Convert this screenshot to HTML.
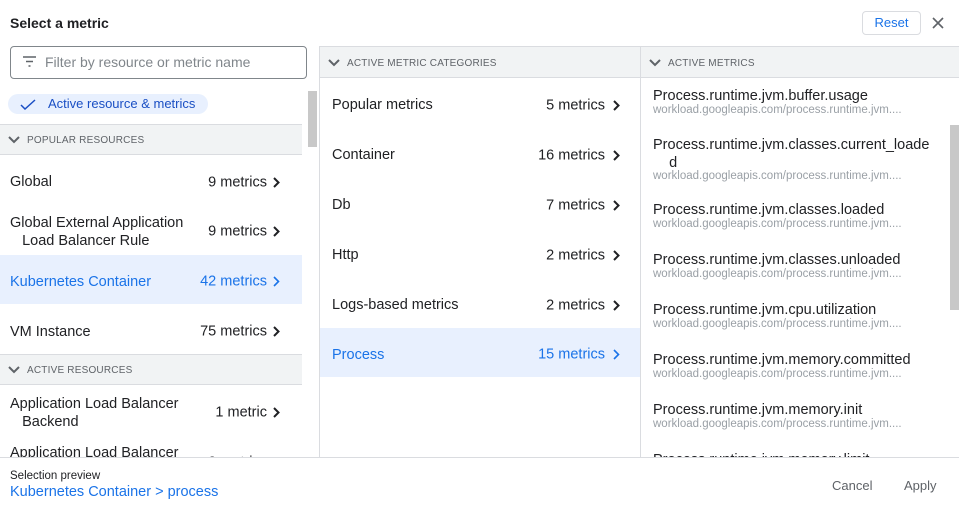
<!DOCTYPE html>
<html><head><style>
*{margin:0;padding:0;box-sizing:border-box}
body{width:959px;height:507px;overflow:hidden;background:#fff;font-family:"Liberation Sans",Arial,sans-serif;color:#202124;position:relative}
.abs{position:absolute}
.title{left:10px;top:15px;font-size:14px;font-weight:bold}
.reset{left:862px;top:11px;width:59px;height:24px;border:1px solid #dadce0;border-radius:4px;color:#1a73e8;font-size:13px;text-align:center;line-height:22px}
.search{left:10px;top:46px;width:297px;height:33px;border:1px solid #80868b;border-radius:4px}
.search span{position:absolute;left:34px;top:7px;font-size:14px;color:#80868b}
.chip{left:8px;top:94px;width:200px;height:20px;background:#e8f0fe;border-radius:10px;color:#1a4fc4;font-size:13px;line-height:20px;padding-left:40px}
.band{background:#f1f3f4;border-top:1px solid #dadce0;border-bottom:1px solid #dadce0;font-size:10px;color:#5f6368;letter-spacing:.2px;padding-left:27px}
.row{font-size:14.5px;height:50px}
.row .l{position:absolute;left:10px;top:0;line-height:18px}
.row .r{position:absolute;right:35px;top:50%;transform:translateY(-40%)}
.row .c{position:absolute;right:22px;top:50%;margin-top:-4px}
.sel{background:#e8f0fe;color:#1a73e8}
.mt{font-size:14.5px;position:absolute;left:653px}
.ms{font-size:11.5px;color:#9aa0a6;position:absolute;left:653px}
.chev{position:absolute;left:8px}
</style></head><body>
<div class="abs title">Select a metric</div>
<div class="abs reset">Reset</div>
<svg class="abs" style="left:932px;top:17px" width="12" height="12"><path d="M1 1L11 11M11 1L1 11" stroke="#5f6368" stroke-width="1.6"/></svg>

<div class="abs" style="left:319px;top:46px;width:1px;height:411px;background:#dadce0"></div>
<div class="abs" style="left:640px;top:46px;width:1px;height:411px;background:#dadce0"></div>

<div class="abs search"><svg class="abs" style="left:12px;top:9px" width="14" height="12"><path d="M0 1h13M3 5.5h7M5.5 10h2" stroke="#5f6368" stroke-width="1.6"/></svg><span>Filter by resource or metric name</span></div>
<div class="abs chip"><svg class="abs" style="left:12px;top:5px" width="16" height="11"><path d="M1 6l4 4L15 1" stroke="#1a4fc4" stroke-width="1.5" fill="none"/></svg>Active resource &amp; metrics</div>
<div class="abs" style="left:308px;top:91px;width:9px;height:56px;background:#c8c8c8"></div>

<div class="abs band" style="left:0;top:124px;width:302px;height:31px;line-height:32px"><svg class="chev" style="top:11px" width="12" height="8"><path d="M1 1l5 5 5-5" stroke="#5f6368" stroke-width="2" fill="none"/></svg>POPULAR RESOURCES</div>
<div class="abs row" style="left:0;top:156px;width:302px"><div class="l" style="top:17px">Global</div><div class="r">9 metrics</div><svg class="c" width="7" height="11"><path d="M1 1l4.5 4.5L1 10" stroke="currentColor" stroke-width="2" fill="none"/></svg></div>
<div class="abs row" style="left:0;top:205px;width:302px"><div class="l" style="top:9px">Global External Application<br>&nbsp;&nbsp;&nbsp;Load Balancer Rule</div><div class="r">9 metrics</div><svg class="c" width="7" height="11"><path d="M1 1l4.5 4.5L1 10" stroke="currentColor" stroke-width="2" fill="none"/></svg></div>
<div class="abs row sel" style="left:0;top:255px;width:302px;height:49px"><div class="l" style="top:18px">Kubernetes Container</div><div class="r">42 metrics</div><svg class="c" width="7" height="11"><path d="M1 1l4.5 4.5L1 10" stroke="currentColor" stroke-width="1.6" fill="none"/></svg></div>
<div class="abs row" style="left:0;top:305px;width:302px"><div class="l" style="top:18px">VM Instance</div><div class="r">75 metrics</div><svg class="c" width="7" height="11"><path d="M1 1l4.5 4.5L1 10" stroke="currentColor" stroke-width="2" fill="none"/></svg></div>
<div class="abs band" style="left:0;top:354px;width:302px;height:31px;line-height:32px"><svg class="chev" style="top:11px" width="12" height="8"><path d="M1 1l5 5 5-5" stroke="#5f6368" stroke-width="2" fill="none"/></svg>ACTIVE RESOURCES</div>
<div class="abs row" style="left:0;top:386px;width:302px"><div class="l" style="top:9px">Application Load Balancer<br>&nbsp;&nbsp;&nbsp;Backend</div><div class="r">1 metric</div><svg class="c" width="7" height="11"><path d="M1 1l4.5 4.5L1 10" stroke="currentColor" stroke-width="2" fill="none"/></svg></div>
<div class="abs row" style="left:0;top:436px;width:302px;height:21px;overflow:hidden"><div class="l" style="top:8px">Application Load Balancer</div><div class="r" style="top:25px">2 metrics</div></div>

<div class="abs band" style="left:320px;top:46px;width:320px;height:32px;line-height:33px"><svg class="chev" style="top:12px" width="12" height="8"><path d="M1 1l5 5 5-5" stroke="#5f6368" stroke-width="2" fill="none"/></svg>ACTIVE METRIC CATEGORIES</div>
<div class="abs row" style="left:320px;top:79px;width:320px"><div class="l" style="left:12px;top:17px">Popular metrics</div><div class="r">5 metrics</div><svg class="c" width="7" height="11" style="right:20px"><path d="M1 1l4.5 4.5L1 10" stroke="currentColor" stroke-width="2" fill="none"/></svg></div>
<div class="abs row" style="left:320px;top:129px;width:320px"><div class="l" style="left:12px;top:17px">Container</div><div class="r">16 metrics</div><svg class="c" width="7" height="11" style="right:20px"><path d="M1 1l4.5 4.5L1 10" stroke="currentColor" stroke-width="2" fill="none"/></svg></div>
<div class="abs row" style="left:320px;top:179px;width:320px"><div class="l" style="left:12px;top:17px">Db</div><div class="r">7 metrics</div><svg class="c" width="7" height="11" style="right:20px"><path d="M1 1l4.5 4.5L1 10" stroke="currentColor" stroke-width="2" fill="none"/></svg></div>
<div class="abs row" style="left:320px;top:229px;width:320px"><div class="l" style="left:12px;top:17px">Http</div><div class="r">2 metrics</div><svg class="c" width="7" height="11" style="right:20px"><path d="M1 1l4.5 4.5L1 10" stroke="currentColor" stroke-width="2" fill="none"/></svg></div>
<div class="abs row" style="left:320px;top:279px;width:320px"><div class="l" style="left:12px;top:17px">Logs-based metrics</div><div class="r">2 metrics</div><svg class="c" width="7" height="11" style="right:20px"><path d="M1 1l4.5 4.5L1 10" stroke="currentColor" stroke-width="2" fill="none"/></svg></div>
<div class="abs row sel" style="left:320px;top:328px;width:320px;height:49px"><div class="l" style="left:12px;top:18px">Process</div><div class="r">15 metrics</div><svg class="c" width="7" height="11" style="right:20px"><path d="M1 1l4.5 4.5L1 10" stroke="currentColor" stroke-width="1.6" fill="none"/></svg></div>

<div class="abs band" style="left:641px;top:46px;width:318px;height:32px;line-height:33px"><svg class="chev" style="top:12px" width="12" height="8"><path d="M1 1l5 5 5-5" stroke="#5f6368" stroke-width="2" fill="none"/></svg>ACTIVE METRICS</div>
<div class="abs" style="left:950px;top:125px;width:9px;height:185px;background:#c8c8c8"></div>
<div class="mt" style="top:88px">Process.runtime.jvm.buffer.usage</div><div class="ms" style="top:104px">workload.googleapis.com/process.runtime.jvm....</div>
<div class="mt" style="top:136px;line-height:18px">Process.runtime.jvm.classes.current_loade<br>&nbsp;&nbsp;&nbsp;&nbsp;d</div><div class="ms" style="top:170px">workload.googleapis.com/process.runtime.jvm....</div>
<div class="mt" style="top:202px">Process.runtime.jvm.classes.loaded</div><div class="ms" style="top:218px">workload.googleapis.com/process.runtime.jvm....</div>
<div class="mt" style="top:252px">Process.runtime.jvm.classes.unloaded</div><div class="ms" style="top:268px">workload.googleapis.com/process.runtime.jvm....</div>
<div class="mt" style="top:302px">Process.runtime.jvm.cpu.utilization</div><div class="ms" style="top:318px">workload.googleapis.com/process.runtime.jvm....</div>
<div class="mt" style="top:352px">Process.runtime.jvm.memory.committed</div><div class="ms" style="top:368px">workload.googleapis.com/process.runtime.jvm....</div>
<div class="mt" style="top:402px">Process.runtime.jvm.memory.init</div><div class="ms" style="top:418px">workload.googleapis.com/process.runtime.jvm....</div>
<div class="abs" style="left:641px;top:446px;width:300px;height:11px;overflow:hidden"><div class="mt" style="left:12px;top:6px">Process.runtime.jvm.memory.limit</div></div>

<div class="abs" style="left:0;top:457px;width:959px;height:50px;background:#fff;border-top:1px solid #dadce0">
<div class="abs" style="left:10px;top:12px;font-size:11.5px;color:#202124">Selection preview</div>
<div class="abs" style="left:10px;top:26px;font-size:14.5px;color:#1a73e8">Kubernetes Container &gt; process</div>
<div class="abs" style="left:832px;top:20px;font-size:13px;color:#5f6368">Cancel</div>
<div class="abs" style="left:904px;top:20px;font-size:13px;color:#5f6368">Apply</div>
</div>
</body></html>
